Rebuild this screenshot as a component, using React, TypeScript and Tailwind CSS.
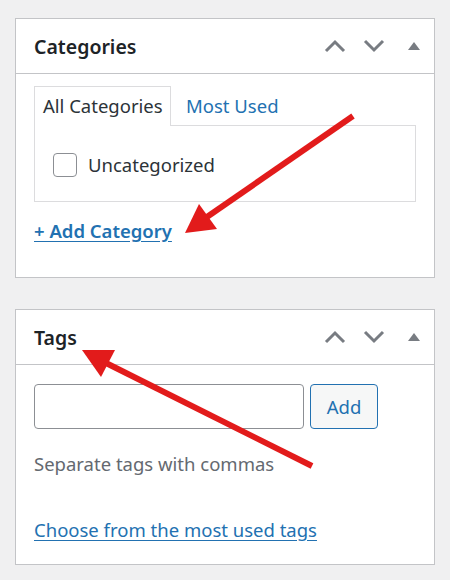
import React from 'react'

const font = { fontFamily: '"Noto Sans", "Open Sans", sans-serif' }

const HeaderIcons = () => (
  <div className="flex items-center">
    <svg width="22" height="14" viewBox="0 0 22 14" className="mr-[17px]">
      <path d="M2 12 L11 3 L20 12" fill="none" stroke="#787c82" strokeWidth="3" />
    </svg>
    <svg width="22" height="14" viewBox="0 0 22 14" className="mr-[22px]">
      <path d="M2 2 L11 11 L20 2" fill="none" stroke="#787c82" strokeWidth="3" />
    </svg>
    <svg width="14" height="10" viewBox="0 0 14 10" className="mr-[13px]">
      <path d="M7 1 L13 9 L1 9 Z" fill="#787c82" />
    </svg>
  </div>
)

const PanelHeader = ({ title }: { title: string }) => (
  <div className="h-[55px] border-b border-[#c3c4c7] flex items-center justify-between">
    <h2 className="pl-[18px] text-[19.5px] font-semibold text-[#1d2327] leading-none pt-[1px]">{title}</h2>
    <HeaderIcons />
  </div>
)

const App = () => {
  return (
    <div className="relative w-[450px] h-[580px] bg-[#f0f0f1] pt-[18px] pl-[15px]" style={font}>
      {/* categories */}
      <div className="w-[420px] bg-white border border-[#c3c4c7]">
        <PanelHeader title="Categories" />
        <div className="px-[18px] pt-[12px] h-[203px]">
          <div className="flex h-[40px] text-[18.5px] leading-[28px]">
            <div className="w-[137px] border border-b-0 border-[#dcdcde] bg-white pl-[8px] pt-[5px] text-[#2c3338] relative z-10">
              All Categories
            </div>
            <div className="pl-[15px] pt-[6px] text-[#2271b1]">Most Used</div>
          </div>
          <div className="w-[382px] h-[77px] border border-[#dcdcde] -mt-[1px] flex items-start pl-[18px] pt-[27px]">
            <span className="w-[24px] h-[24px] rounded-[4px] border border-[#8c8f94] bg-white" />
            <span className="ml-[11px] text-[18.5px] leading-[28px] text-[#2c3338] -mt-[2px]">Uncategorized</span>
          </div>
          <a href="#" className="block mt-[15px] text-[18.5px] leading-[28px] font-semibold text-[#2271b1] underline underline-offset-[3px]">
            + Add Category
          </a>
        </div>
      </div>

      {/* tags */}
      <div className="w-[420px] mt-[31px] bg-white border border-[#c3c4c7]">
        <PanelHeader title="Tags" />
        <div className="px-[18px] pt-[19px] h-[199px]">
          <div className="flex gap-[6px]">
            <input className="w-[270px] h-[45px] rounded-[4px] border border-[#8c8f94] bg-white" />
            <button className="w-[68px] h-[45px] rounded-[4px] border border-[#2271b1] bg-[#f6f7f7] text-[#2271b1] text-[18.5px]">
              Add
            </button>
          </div>
          <p className="mt-[21px] text-[18.5px] leading-[28px] text-[#646970]">Separate tags with commas</p>
          <a href="#" className="block mt-[38px] text-[18.5px] leading-[28px] text-[#2271b1] underline underline-offset-[3px]">
            Choose from the most used tags
          </a>
        </div>
      </div>

      {/* annotation arrows */}
      <svg className="absolute inset-0 pointer-events-none" width="450" height="580" viewBox="0 0 450 580">
        <line x1="353" y1="116" x2="204" y2="219" stroke="#e21b1b" strokeWidth="6" />
        <polygon points="185,233 199,204 217,229" fill="#e21b1b" />
        <line x1="312" y1="466" x2="102" y2="361" stroke="#e21b1b" strokeWidth="6" />
        <polygon points="82,350 115,350 101,377" fill="#e21b1b" />
      </svg>
    </div>
  )
}

export default App
